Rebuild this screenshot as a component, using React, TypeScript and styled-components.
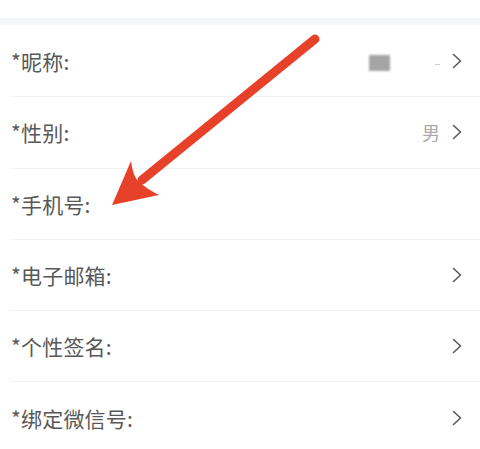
import React from "react"
import styled, { createGlobalStyle } from "styled-components"

const GlobalStyle = createGlobalStyle`
  html, body {
    margin: 0;
    padding: 0;
    background: #fff;
  }
  body {
    font-family: "Noto Sans CJK SC", "Noto Sans", sans-serif;
  }
`

const rows = [
  { label: "*昵称:", value: "blur", arrow: true },
  { label: "*性别:", value: "男", arrow: true },
  { label: "*手机号:", value: "", arrow: false },
  { label: "*电子邮箱:", value: "", arrow: true },
  { label: "*个性签名:", value: "", arrow: true },
  { label: "*绑定微信号:", value: "", arrow: true },
]

export default function App() {
  return (
    <>
      <GlobalStyle />
      <Page>
        <TopBar />
        <Band />
        <List>
          {rows.map((r) => (
            <Row key={r.label}>
              <Label>{r.label}</Label>
              <Right>
                {r.value === "blur" ? (
                  <>
                    <Masked />
                    <Dash />
                  </>
                ) : (
                  r.value && <Value>{r.value}</Value>
                )}
                {r.arrow && <Chevron />}
              </Right>
            </Row>
          ))}
        </List>
        <Pointer />
      </Page>
    </>
  )
}

const Chevron = () => (
  <svg width="10" height="16" viewBox="0 0 10 16">
    <path d="M1.5 1.5 L8.5 8 L1.5 14.5" fill="none" stroke="#5a5a5a" strokeWidth="1.6" strokeLinecap="round" strokeLinejoin="round" />
  </svg>
)

const Pointer = () => (
  <ArrowSvg width="480" height="449" viewBox="0 0 480 449">
    <line x1="315" y1="39" x2="142" y2="180" stroke="#e8412a" strokeWidth="9" strokeLinecap="round" />
    <path d="M112 205 L131 161 Q133 177 139 182 Q147 189 159 195 Z" fill="#e8412a" />
  </ArrowSvg>
)

const Page = styled.div`
  position: relative;
  width: 480px;
  height: 449px;
  overflow: hidden;
  background: #fff;
`

const TopBar = styled.div`
  height: 18px;
  background: #fff;
`

const Band = styled.div`
  height: 7px;
  background: linear-gradient(#f2f3f5, #f7f8f9);
`

const List = styled.div`
  padding-top: 1px;
`

const Row = styled.div`
  display: flex;
  align-items: center;
  justify-content: space-between;
  height: 70.3px;
  margin-left: 10px;
  padding: 0 18px 0 1px;
  border-bottom: 1px solid #f1f1f1;
`

const Label = styled.span`
  font-size: 21px;
  color: #585858;
  letter-spacing: 0.2px;
`

const Right = styled.div`
  display: flex;
  align-items: center;
`

const Value = styled.span`
  font-size: 18px;
  color: #aaa;
  margin-right: 12px;
`

const Masked = styled.span`
  width: 21px;
  height: 16px;
  background: #a5a5a5;
  filter: blur(1px);
  margin-right: 45px;
  margin-top: 4px;
`

const Dash = styled.span`
  width: 5px;
  height: 1px;
  background: #ccc;
  margin-right: 12px;
  margin-top: 6px;
`

const ArrowSvg = styled.svg`
  position: absolute;
  left: 0;
  top: 0;
  pointer-events: none;
`
